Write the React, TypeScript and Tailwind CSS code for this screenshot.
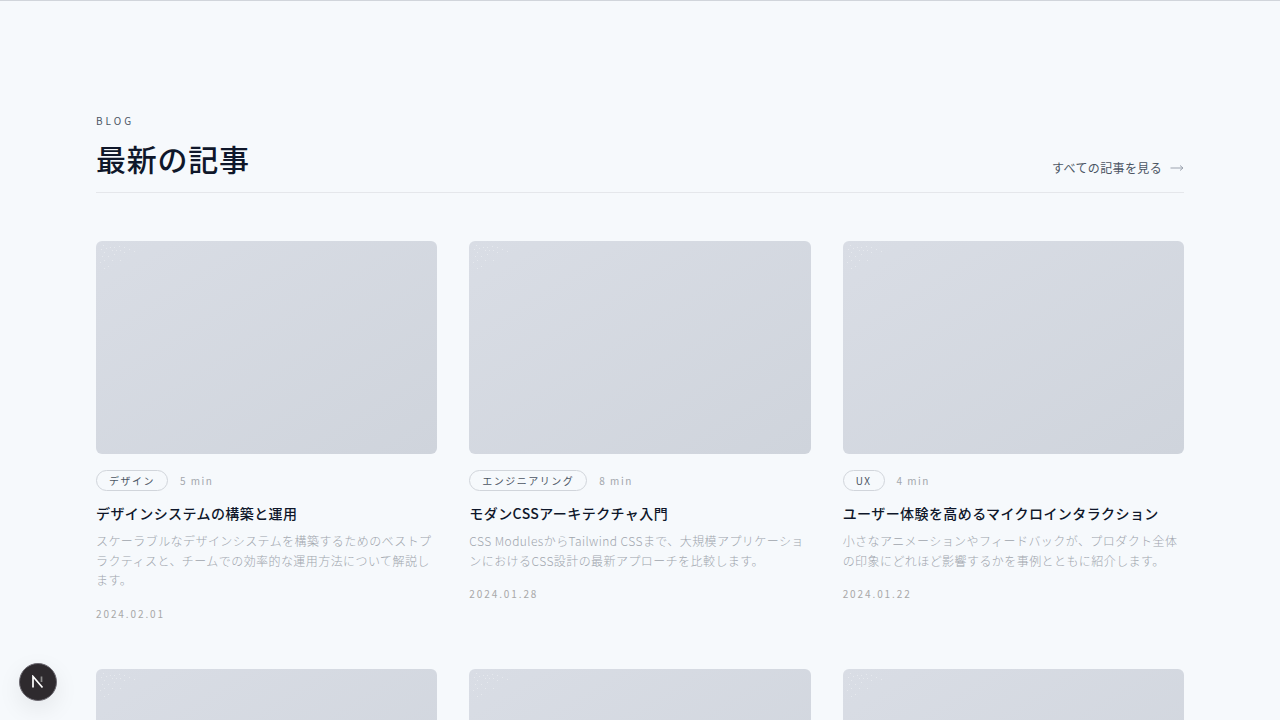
import React from 'react';

type Post = {
  tag: string;
  time: string;
  title: string;
  body: string;
  date: string;
};

const posts: Post[] = [
  {
    tag: 'デザイン',
    time: '5 min',
    title: 'デザインシステムの構築と運用',
    body: 'スケーラブルなデザインシステムを構築するためのベストプラクティスと、チームでの効率的な運用方法について解説します。',
    date: '2024.02.01',
  },
  {
    tag: 'エンジニアリング',
    time: '8 min',
    title: 'モダンCSSアーキテクチャ入門',
    body: 'CSS ModulesからTailwind CSSまで、大規模アプリケーションにおけるCSS設計の最新アプローチを比較します。',
    date: '2024.01.28',
  },
  {
    tag: 'UX',
    time: '4 min',
    title: 'ユーザー体験を高めるマイクロインタラクション',
    body: '小さなアニメーションやフィードバックが、プロダクト全体の印象にどれほど影響するかを事例とともに紹介します。',
    date: '2024.01.22',
  },
];

const dots = [
  [7, 4], [5, 8], [10, 7], [14, 6], [18, 6], [23, 5], [28, 6], [33, 8],
  [16, 9], [20, 9], [24, 9], [28, 11], [38, 10], [8, 11], [6, 15], [12, 15],
  [18, 13], [4, 21], [8, 19], [16, 19], [24, 19], [12, 25], [8, 27],
];

function Thumb() {
  return (
    <div className="relative h-[213px] overflow-hidden rounded-md bg-gradient-to-br from-[#d9dde5] to-[#cfd4dc]">
      <svg className="absolute left-0 top-0" width="60" height="40">
        {dots.map(([x, y], i) => (
          <rect key={i} x={x} y={y} width="1" height="1" fill="#ffffff" opacity="0.35" />
        ))}
      </svg>
    </div>
  );
}

function Card({ post }: { post: Post }) {
  return (
    <article className="flex flex-col">
      <Thumb />
      <div className="mt-4 flex h-[21px] items-center gap-3">
        <span className="flex h-[21px] items-center rounded-full border border-[#d1d5db] px-3 text-[10px] tracking-[0.15em] text-[#4b5563]">
          {post.tag}
        </span>
        <span className="text-[10px] tracking-[0.15em] text-[#a3a7ad]">{post.time}</span>
      </div>
      <h3 className="mt-[11px] text-[14px] font-medium leading-[22px] tracking-[0.03em] text-[#0f172a]">
        {post.title}
      </h3>
      <p className="mt-[7px] text-[12px] font-light leading-[19.5px] tracking-[0.036em] text-[#a0a5ad]">{post.body}</p>
      <div className="mt-[16px] text-[10px] leading-[15px] tracking-[1.9px] text-[#a8a8a8]">{post.date}</div>
    </article>
  );
}

export default function App() {
  return (
    <div
      className="relative h-[720px] overflow-hidden border-t border-[#d1d5db] bg-[#f6f9fc] px-24 pt-[112px] [text-rendering:optimizeSpeed]"
      style={{ fontFamily: '"Noto Sans CJK JP", "Noto Sans", sans-serif' }}
    >
      {/* Header */}
      <header className="flex items-end justify-between border-b border-[#e5e7eb] pb-[15px]">
        <div>
          <p className="text-[10px] leading-[15px] tracking-[0.3em] text-[#4b5563]">BLOG</p>
          <h2 className="mt-3 text-[30px] font-medium leading-[37px] tracking-[0.025em] text-[#0f172a]">最新の記事</h2>
        </div>
        <a className="flex items-center gap-2 text-[12px] leading-[18px] tracking-[0.03em] text-[#4b5563]">
          すべての記事を見る
          <svg width="14" height="10" viewBox="0 0 14 10" fill="none" stroke="#9ca3af" strokeWidth="1">
            <path d="M0.5 5h12.5M10 2.5 13 5 10 7.5" />
          </svg>
        </a>
      </header>

      {/* Grid */}
      <div className="mt-12 grid grid-cols-3 gap-x-8 gap-y-12">
        {posts.map((p) => (
          <Card key={p.title} post={p} />
        ))}
        <Thumb />
        <Thumb />
        <Thumb />
      </div>

      {/* Next.js dev badge */}
      <div className="absolute bottom-[19px] left-[19px] flex h-[38px] w-[38px] items-center justify-center rounded-full border border-[#6b6870] bg-[#2e2a2e] shadow-[0_8px_24px_rgba(0,0,0,0.08)]">
        <svg width="14" height="14" viewBox="0 0 14 14" fill="none" stroke="#ffffff" strokeWidth="1.7">
          <path d="M2 12.5V1.5L11.5 12.5" />
          <path d="M10.5 1.5V7" stroke="#8f8f8f" />
        </svg>
      </div>
    </div>
  );
}
